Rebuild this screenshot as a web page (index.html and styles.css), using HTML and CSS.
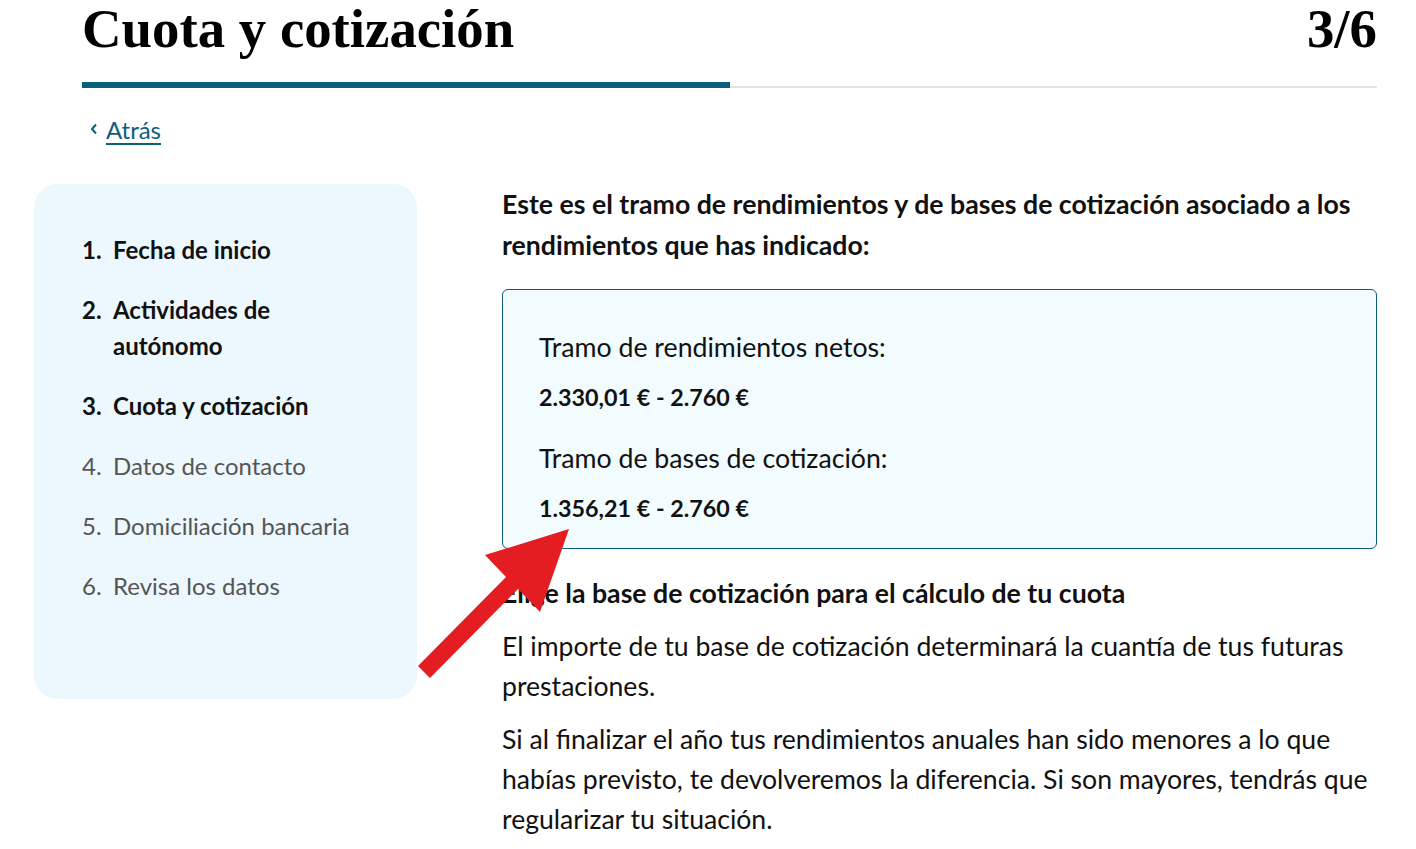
FILE: index.html
```html
<!DOCTYPE html>
<html lang="es">
<head>
<meta charset="utf-8">
<title>Cuota y cotización</title>
<link rel="stylesheet" href="styles.css">
</head>
<body>
<div class="page">
  <header class="header">
    <h1 class="title">Cuota y cotización</h1>
    <span class="step">3/6</span>
  </header>
  <div class="progress"><div class="progress-fill" style="width:50%"></div></div>
  <a class="back" href="#">
    <svg class="chev" width="8" height="12" viewBox="0 0 8 12"><path d="M6 1.5 L2 6 L6 10.5" fill="none" stroke="#0b5f7c" stroke-width="2"/></svg>
    <span class="back-text">Atrás</span>
  </a>
  <div class="layout">
    <aside class="sidebar">
      <ol class="steps">
        <li class="done">Fecha de inicio</li>
        <li class="done">Actividades de autónomo</li>
        <li class="done">Cuota y cotización</li>
        <li>Datos de contacto</li>
        <li>Domiciliación bancaria</li>
        <li>Revisa los datos</li>
      </ol>
    </aside>
    <main class="main">
      <h2 class="lead">Este es el tramo de rendimientos y de bases de cotización asociado a los rendimientos que has indicado:</h2>
      <div class="box">
        <p class="label">Tramo de rendimientos netos:</p>
        <p class="value">2.330,01 € - 2.760 €</p>
        <p class="label">Tramo de bases de cotización:</p>
        <p class="value last">1.356,21 € - 2.760 €</p>
      </div>
      <h3 class="sub">Elige la base de cotización para el cálculo de tu cuota</h3>
      <p class="text">El importe de tu base de cotización determinará la cuantía de tus futuras prestaciones.</p>
      <p class="text">Si al finalizar el año tus rendimientos anuales han sido menores a lo que habías previsto, te devolveremos la diferencia. Si son mayores, tendrás que regularizar tu situación.</p>
    </main>
  </div>
  <svg class="arrow" width="1416" height="849" viewBox="0 0 1416 849">
    <polygon points="418,666 506,577 485,555 569,529 540,612 518,589 430,678" fill="#e31d22"/>
  </svg>
</div>
</body>
</html>
```
FILE: styles.css
```css
* { box-sizing: border-box; }
html, body { margin: 0; padding: 0; background: #fff; }
body {
  font-family: Lato, "Open Sans", sans-serif;
  color: #111;
  overflow: hidden;
}
.page {
  position: relative;
  width: 1416px;
  height: 849px;
  padding: 4px 39px 0 82px;
}
.header {
  display: flex;
  justify-content: space-between;
  align-items: flex-start;
}
.title, .step {
  font-family: "Liberation Serif", "Times New Roman", serif;
  font-weight: 700;
  font-size: 54.8px;
  line-height: 50px;
  margin: 0;
  color: #000;
}
.progress {
  margin-top: 28px;
  height: 6px;
  position: relative;
  border-bottom: 2px solid #e4e4e4;
}
.progress-fill {
  height: 6px;
  background: #0b5f7c;
}
.back {
  display: inline-flex;
  align-items: center;
  gap: 8px;
  margin-top: 27px;
  margin-left: 8px;
  color: #0b5f7c;
  text-decoration: none;
  font-size: 24px;
  line-height: 30px;
}
.chev { margin-top: -2px; }
.back-text {
  text-decoration: underline;
  text-underline-offset: 4px;
  text-decoration-thickness: 2px;
}
.layout {
  display: flex;
  align-items: flex-start;
  margin-top: 39px;
}
.sidebar {
  width: 383px;
  flex: none;
  margin-left: -48px;
  background: #ecf8fd;
  border-radius: 24px;
  padding: 48px 60px 95px 48px;
}
.steps {
  margin: 0;
  padding: 0;
  list-style: none;
  counter-reset: s;
  display: flex;
  flex-direction: column;
  gap: 24px;
}
.steps li {
  counter-increment: s;
  display: flex;
  font-size: 24px;
  line-height: 36px;
  color: #555;
}
.steps li::before {
  content: counter(s) ".";
  width: 31px;
  flex: none;
}
.steps li.done {
  color: #111;
  font-weight: 700;
}
.main {
  flex: 1;
  margin-left: 85px;
  padding-top: 0;
}
.lead {
  margin: 0;
  font-size: 26.7px;
  line-height: 41px;
  font-weight: 700;
}
.box {
  margin-top: 23px;
  border: 1px solid #0b5f7c;
  border-radius: 6px;
  background: #f2fbfd;
  padding: 37px 36px 22px;
}
.label {
  margin: 0 0 12px;
  font-size: 26.7px;
  line-height: 40px;
}
.value {
  margin: 0 0 23px;
  font-size: 23.3px;
  line-height: 36px;
  font-weight: 700;
}
.value.last { margin-bottom: 0; }
.sub {
  margin: 24px 0 0;
  font-size: 26.7px;
  line-height: 40px;
  font-weight: 700;
}
.text {
  margin: 13px 0 0;
  font-size: 26.6px;
  line-height: 40px;
}
.arrow {
  position: absolute;
  left: 0;
  top: 0;
  pointer-events: none;
}
```
